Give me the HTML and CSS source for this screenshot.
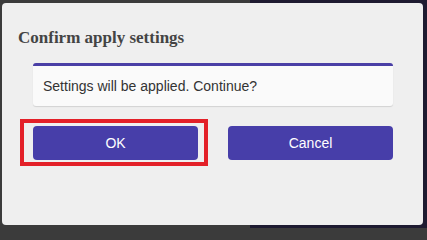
FILE: index.html
```html
<!DOCTYPE html>
<html lang="en">
<head>
<meta charset="utf-8">
<title>Confirm apply settings</title>
<link rel="stylesheet" href="styles.css">
</head>
<body>
<div class="backdrop">
  <div class="dialog" role="dialog" aria-labelledby="dlg-title">
    <h2 class="dialog-title" id="dlg-title">Confirm apply settings</h2>
    <div class="message">Settings will be applied. Continue?</div>
    <div class="actions">
      <div class="btn-wrap">
        <button class="btn" type="button">OK</button>
        <span class="highlight"></span>
      </div>
      <div class="btn-wrap">
        <button class="btn" type="button">Cancel</button>
      </div>
    </div>
  </div>
</div>
</body>
</html>
```
FILE: styles.css
```css
* { box-sizing: border-box; }
html, body { margin: 0; padding: 0; }
html { background: #3b3b3b; }
body {
  width: 427px;
  height: 228px;
  overflow: hidden;
  background: linear-gradient(to right, #3b3b3b 0, #3b3b3b 250px, #1e1b31 250px);
  font-family: "Liberation Sans", Arial, sans-serif;
}
.backdrop {
  padding: 3px 4px 3px 2px;
}
.dialog {
  width: 421px;
  height: 222px;
  background: #efefef;
  border-radius: 4px;
  padding: 25px 30px 0 31px;
}
.dialog-title {
  margin: 0 0 15px -15px;
  font-family: "Liberation Serif", "Times New Roman", serif;
  font-weight: bold;
  font-size: 17px;
  line-height: 20px;
  color: #444444;
}
.message {
  width: 360px;
  height: 43px;
  background: #fafafa;
  border-top: 3px solid #4a3fa6;
  border-radius: 3px;
  box-shadow: 0 1px 1px rgba(0, 0, 0, 0.12);
  display: flex;
  align-items: center;
  padding: 0 10px;
  font-size: 14px;
  color: #333333;
}
.actions {
  margin-top: 20px;
  width: 360px;
  display: flex;
  gap: 30px;
}
.btn-wrap {
  position: relative;
  flex: 1;
}
.btn {
  display: block;
  width: 100%;
  height: 34px;
  border: none;
  border-radius: 4px;
  background: #473ea9;
  color: #ffffff;
  font-family: "Liberation Sans", Arial, sans-serif;
  font-size: 14px;
  padding: 0;
  cursor: pointer;
}
.highlight {
  position: absolute;
  left: -13px;
  top: -7px;
  width: 188px;
  height: 47px;
  border: 4px solid #e32028;
  pointer-events: none;
}
```
